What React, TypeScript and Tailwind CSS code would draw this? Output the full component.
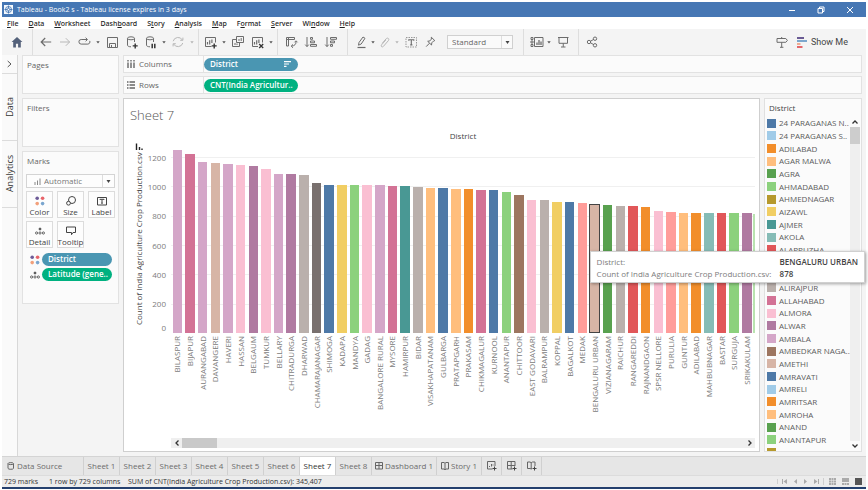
import type { ReactNode } from "react";

type Bar = { name: string; value: number; color: string };

const bars: Bar[] = [
  { name: "BILASPUR", value: 1245, color: "#d4a6c8" },
  { name: "BIJAPUR", value: 1220, color: "#d37295" },
  { name: "AURANGABAD", value: 1168, color: "#d4a6c8" },
  { name: "DAVANGERE", value: 1155, color: "#d7b5a6" },
  { name: "HAVERI", value: 1150, color: "#d4a6c8" },
  { name: "HASSAN", value: 1145, color: "#fabfd2" },
  { name: "BELGAUM", value: 1139, color: "#b07aa1" },
  { name: "TUMKUR", value: 1118, color: "#fabfd2" },
  { name: "BELLARY", value: 1084, color: "#d4a6c8" },
  { name: "CHITRADURGA", value: 1080, color: "#b07aa1" },
  { name: "DHARWAD", value: 1073, color: "#bab0ac" },
  { name: "CHAMARAJANAGAR", value: 1025, color: "#79706e" },
  { name: "SHIMOGA", value: 1011, color: "#4e79a7" },
  { name: "KADAPA", value: 1009, color: "#f1ce63" },
  { name: "MANDYA", value: 1009, color: "#8cd17d" },
  { name: "GADAG", value: 1005, color: "#fabfd2" },
  { name: "BANGALORE RURAL", value: 1005, color: "#d4a6c8" },
  { name: "MYSORE", value: 1004, color: "#d37295" },
  { name: "HAMIRPUR", value: 1004, color: "#499894" },
  { name: "BIDAR", value: 995, color: "#bab0ac" },
  { name: "VISAKHAPATANAM", value: 991, color: "#ffbe7d" },
  { name: "GULBARGA", value: 986, color: "#4e79a7" },
  { name: "PRATAPGARH", value: 982, color: "#ffbe7d" },
  { name: "PRAKASAM", value: 980, color: "#f28e2b" },
  { name: "CHIKMAGALUR", value: 975, color: "#d37295" },
  { name: "KURNOOL", value: 973, color: "#4e79a7" },
  { name: "ANANTAPUR", value: 961, color: "#8cd17d" },
  { name: "CHITTOOR", value: 943, color: "#9d7660" },
  { name: "EAST GODAVARI", value: 909, color: "#fabfd2" },
  { name: "BALRAMPUR", value: 909, color: "#bab0ac" },
  { name: "KOPPAL", value: 895, color: "#f1ce63" },
  { name: "BAGALKOT", value: 891, color: "#4e79a7" },
  { name: "MEDAK", value: 886, color: "#ff9d9a" },
  { name: "BENGALURU URBAN", value: 878, color: "#d7b5a6" },
  { name: "VIZIANAGARAM", value: 875, color: "#59a14f" },
  { name: "RAICHUR", value: 866, color: "#bab0ac" },
  { name: "RANGAREDDI", value: 866, color: "#e15759" },
  { name: "RAJNANDGAON", value: 859, color: "#f28e2b" },
  { name: "SPSR NELLORE", value: 834, color: "#fabfd2" },
  { name: "PURULIA", value: 827, color: "#ff9d9a" },
  { name: "GUNTUR", value: 820, color: "#ffbe7d" },
  { name: "ADILABAD", value: 820, color: "#f28e2b" },
  { name: "MAHBUBNAGAR", value: 818, color: "#86bcb6" },
  { name: "BASTAR", value: 818, color: "#e15759" },
  { name: "SURGUJA", value: 814, color: "#8cd17d" },
  { name: "SRIKAKULAM", value: 814, color: "#b07aa1" },
];

const AXIS_MAX = 1260;

const palette = [
  "#4e79a7", "#a0cbe8", "#f28e2b", "#ffbe7d", "#59a14f", "#8cd17d", "#b6992d",
  "#f1ce63", "#499894", "#86bcb6", "#e15759", "#ff9d9a", "#79706e", "#bab0ac",
  "#d37295", "#fabfd2", "#b07aa1", "#d4a6c8", "#9d7660", "#d7b5a6",
];

const legend = [
  "24 PARAGANAS N..", "24 PARAGANAS S..", "ADILABAD", "AGAR MALWA", "AGRA",
  "AHMADABAD", "AHMEDNAGAR", "AIZAWL", "AJMER", "AKOLA", "ALAPPUZHA", "ALIGARH",
  "ALIPURDUAR", "ALIRAJPUR", "ALLAHABAD", "ALMORA", "ALWAR", "AMBALA",
  "AMBEDKAR NAGA..", "AMETHI", "AMRAVATI", "AMRELI", "AMRITSAR", "AMROHA",
  "ANAND", "ANANTAPUR", "ANANTNAG",
];

const menus: [string, string, string][] = [
  ["", "F", "ile"], ["", "D", "ata"], ["", "W", "orksheet"], ["Dash", "b", "oard"],
  ["S", "t", "ory"], ["", "A", "nalysis"], ["", "M", "ap"], ["F", "o", "rmat"],
  ["", "S", "erver"], ["Wi", "n", "dow"], ["", "H", "elp"],
];

function Svg({ children, size = 16, className = "" }: { children: ReactNode; size?: number; className?: string }) {
  return (
    <svg
      width={size}
      height={size}
      viewBox={`0 0 ${size} ${size}`}
      fill="none"
      stroke="currentColor"
      strokeWidth="1"
      className={className}
      aria-hidden="true"
    >
      {children}
    </svg>
  );
}

function Tool({ label, dim, children }: { label: string; dim?: boolean; children: ReactNode }) {
  return (
    <button aria-label={label} className={dim ? "size-4 text-[#b8b8b8]" : "size-4 text-[#6c6c6c]"}>
      <Svg>{children}</Svg>
    </button>
  );
}

function Caret({ label, dim }: { label: string; dim?: boolean }) {
  return (
    <button aria-label={label} className={dim ? "flex w-[6px] justify-center text-[#b5b5b5]" : "flex w-[6px] justify-center text-[#555]"}>
      <svg width="4" height="3" viewBox="0 0 4 3" fill="currentColor" aria-hidden="true">
        <path d="M0.3 0.3h3.4L2 2.5z" />
      </svg>
    </button>
  );
}

function Sep() {
  return <div className="w-px self-stretch bg-[#dedede]" />;
}

const Plus = () => <path d="M12.2 9.4v5M9.7 11.9h5" stroke="#333" strokeWidth="1.4" />;

function Toolbar() {
  return (
    <div className="flex h-[26px] shrink-0 items-center bg-[#f4f4f4]">
      <div className="flex w-[30px] justify-center">
        <button aria-label="Start page" className="size-4 text-[#54617a]">
          <Svg><path d="M8 3 2.600 8h1.600v5.400h2.700v-3.600h2.200v3.600h2.700V8h1.600z" fill="currentColor" stroke="none" /></Svg>
        </button>
      </div>
      <Sep />
      <div className="flex items-center gap-[3px] pr-[3px] pl-[5px]">
        <Tool label="Undo"><path d="M13.2 8H3.2M7.2 4 3.2 8l4 4" strokeWidth="1.2" /></Tool>
        <Tool label="Redo" dim><path d="M3 8h9.6M8.8 4.2 12.6 8l-3.8 3.8" /></Tool>
        <Tool label="Replay"><path d="M11 5.500H5.200a2.300 2.300 0 0 0 0 4.600h6.600a2.200 2.200 0 0 0 1.900-3.200M9.600 3.700l1.900 1.800-1.900 1.800" /></Tool>
        <Caret label="Replay options" />
        <Tool label="Save"><path d="M3.500 3.500h10v10h-10zM5.500 13.500v-4h6v4M7.500 11v2.500" /></Tool>
        <Tool label="New data source">
          <path d="M4.500 4.500v6.800c0 .8 1.500 1.500 3.500 1.500M11.500 8V4.500" /><ellipse cx="8" cy="4.300" rx="3.500" ry="1.500" /><Plus />
        </Tool>
        <Tool label="Pause auto updates">
          <path d="M4.500 4.500v6.800c0 .8 1.500 1.500 3.500 1.500M11.500 8V4.500" /><ellipse cx="8" cy="4.300" rx="3.500" ry="1.500" />
          <path d="M10.200 9.800v4.500M12.800 9.800v4.500" stroke="#333" strokeWidth="1.500" />
        </Tool>
        <Caret label="Pause options" />
        <Tool label="Run update" dim><path d="M3.200 7.2A5 5 0 0 1 12.4 6M12.8 9A5 5 0 0 1 3.6 10M12.9 3.6v2.7h-2.7M3.1 12.4V9.7h2.7" /></Tool>
        <Caret label="Update options" dim />
      </div>
      <Sep />
      <div className="flex items-center gap-[3px] px-[3px]">
        <Tool label="New worksheet">
          <path d="M9.500 12.500h-6v-9h10v5" /><path d="M5.500 10.500V8M7.700 10.500V6.200M9.900 9V5.500" strokeWidth="1.200" /><Plus />
        </Tool>
        <Caret label="New worksheet options" />
        <Tool label="Duplicate">
          <path d="M6.500 2.500h7v6h-7zM9.500 8.500v2M6.500 5.500h-4v7h7v-4" /><path d="M9 7V5M11.200 7V4M5 11V9M7 11V9.500" />
        </Tool>
        <Tool label="Clear sheet">
          <path d="M9 12.500H3.500v-9h10v5" /><path d="M5.500 10.500V8M7.700 10.500V6.200M9.900 9V5.500" strokeWidth="1.200" />
          <path d="m10.200 10 4 4M14.200 10l-4 4" stroke="#333" strokeWidth="1.300" />
        </Tool>
        <Caret label="Clear options" />
      </div>
      <Sep />
      <div className="flex items-center gap-1 pr-2 pl-[5px]">
        <Tool label="Swap rows and columns">
          <path d="M3.500 3.500h2v2h-2zM5.500 3.500h6v2h-6zM3.500 5.500h2v6.500h-2z" /><path d="M13 7.500c.3 2.500-1.300 4.400-4.500 4.600M11.500 8.300 13 6.800l1.500 1.500M10 10.400 8.200 12.100l1.800 1.700" />
        </Tool>
        <Tool label="Sort ascending"><path d="M4 3v9.500M2.200 10.600 4 12.600l1.800-2M7.500 3.500h2v1.800h-2zM7.500 7h4v1.800h-4zM7.500 10.500h6v1.800h-6z" /></Tool>
        <Tool label="Sort descending"><path d="M4 3v9.500M2.200 10.600 4 12.600l1.800-2M7.500 3.500h6v1.800h-6zM7.500 7h4v1.800h-4zM7.500 10.500h2v1.800h-2z" /></Tool>
      </div>
      <Sep />
      <div className="flex items-center gap-[3px] pr-[10px] pl-[5px]">
        <div className="flex items-center gap-px">
          <Tool label="Highlight"><path d="M6 8.500 10 3l2 1.300-3.800 5.700-2.700 1.200z" /><path d="M4.500 13.500h8" strokeWidth="1.200" /></Tool>
          <Caret label="Highlight options" />
          <Tool label="Group" dim><path d="m5.200 8.800 4-4.600c1.500-1.500 3.500.2 2.200 1.900l-5 5.800c-1.300 1.300-3-.1-1.900-1.500l4.400-5" transform="translate(0 .5)" /></Tool>
          <Caret label="Group options" dim />
        </div>
        <Tool label="Show mark labels"><path d="M3 3.500h10.500v9.500H3z" strokeDasharray="1.500 1" stroke="#999" /><path d="M5.800 6.800V5.700h5v1.100M8.300 5.700v5.200M7.200 10.900h2.200" strokeWidth="1.100" /></Tool>
        <Tool label="Fix axes"><path d="m9.300 3.200 3.500 3.400-1.200.4-1.800 1.800-.3 2.200-3.800-3.700 2.200-.4 1.500-1.800zM7.500 9.200 4.200 12.600" /></Tool>
        <div className="relative ml-[6px] flex h-[14px] w-[66px] items-center border border-[#d0d0d0] bg-[#fafafa]">
          <select aria-label="Fit" className="h-full w-full appearance-none pl-1 text-[8px] leading-3 text-[#666]">
            <option>Standard</option>
          </select>
          <div className="pointer-events-none absolute inset-y-0 right-0 flex w-[11px] items-center justify-center border-l border-[#ddd] text-[#444]">
            <svg width="5" height="3" viewBox="0 0 5 3" fill="currentColor" aria-hidden="true"><path d="M0.500 0h4L2.500 3z" /></svg>
          </div>
        </div>
      </div>
      <Sep />
      <div className="flex items-center gap-px pr-[7px] pl-[5px]">
        <Tool label="Show or hide cards">
          <path d="M2 3.500h2v2H2zM2 7h2v2H2zM2 10.500h2v2H2zM5.500 3.500H14v9H5.500z" /><path d="M8 11V8.500M10 11V6M12 11V7.500" strokeWidth="1.300" />
        </Tool>
        <Caret label="Card options" />
        <div className="w-px" />
        <Tool label="Presentation mode"><path d="M3 3.500h10.500M4 3.500v5.800h8.500V3.500M8.250 9.300v3.600M6 13h4.500" /></Tool>
      </div>
      <Sep />
      <div className="flex items-center pl-[5px]">
        <Tool label="Share">
          <circle cx="5" cy="8" r="1.700" /><circle cx="11" cy="4.700" r="1.700" /><circle cx="11" cy="11.300" r="1.700" /><path d="m6.500 7.200 3-1.700M6.500 8.800l3 1.700" />
        </Tool>
      </div>
      <div className="ml-auto flex items-center gap-2 pr-[18px]">
        <Tool label="Guide"><path d="M4 4.500h8.800l1.600 1.900-1.600 1.900H4zM8.700 3v1.500M8.700 8.300v5M7 13.300h3.400" /></Tool>
        <button className="flex items-center gap-1 text-[9px] leading-3 text-[#444] [font-family:Roboto,sans-serif]">
          <svg width="10" height="11" viewBox="0 0 10 11" aria-hidden="true">
            <path d="M0 1h7" stroke="#5b4a8a" strokeWidth="1.800" /><path d="M0 4h10" stroke="#6f9fc9" strokeWidth="1.800" />
            <path d="M0 7h3.500" stroke="#f0a58a" strokeWidth="1.800" /><path d="M0 10h5.500" stroke="#e2575c" strokeWidth="1.800" />
          </svg>
          Show Me
        </button>
      </div>
    </div>
  );
}

function ColorDots() {
  return (
    <svg width="10" height="10" viewBox="0 0 10 10" className="shrink-0" aria-hidden="true">
      <circle cx="2.200" cy="2.200" r="1.800" fill="#6d5b97" /><circle cx="7.600" cy="2.200" r="1.800" fill="#e8646a" />
      <circle cx="2.200" cy="7.600" r="1.800" fill="#f2a07b" /><circle cx="7.600" cy="7.600" r="1.800" fill="#7aa6cf" />
    </svg>
  );
}

function DetailDots() {
  return (
    <svg width="10" height="10" viewBox="0 0 10 10" fill="none" stroke="#555" strokeWidth="0.900" className="shrink-0" aria-hidden="true">
      <circle cx="5" cy="3" r="1" fill="#444" /><circle cx="1.600" cy="7" r="1.100" /><circle cx="5" cy="7" r="1.100" /><circle cx="8.400" cy="7" r="1.100" />
    </svg>
  );
}

function MarkButton({ label, children }: { label: string; children: ReactNode }) {
  return (
    <button className="flex h-[27px] flex-col items-center justify-between border border-[#dcdcdc] bg-[#fdfdfd] pt-[3px] pb-px text-[8px] leading-[9px] text-[#444]">
      <span className="flex h-[11px] items-center">{children}</span>
      {label}
    </button>
  );
}

function Cards() {
  return (
    <aside className="flex w-[97px] shrink-0 flex-col gap-1 text-[8px] text-[#666]">
      <section className="h-[39px] border border-[#e2e2e2] bg-[#fbfbfb] px-1 pt-[4px]">
        <h2 className="leading-[10px]">Pages</h2>
      </section>
      <section className="h-[49px] border border-[#e2e2e2] bg-[#fbfbfb] px-1 pt-[4px]">
        <h2 className="leading-[10px]">Filters</h2>
      </section>
      <section className="h-[153px] border border-[#e2e2e2] bg-[#fbfbfb] px-[3px] pt-[4px]">
        <h2 className="pl-px leading-[10px]">Marks</h2>
        <div className="relative mt-[8px] flex h-[14px] items-center border border-[#d4d4d4] bg-[#fdfdfd]">
          <svg width="7" height="7" viewBox="0 0 7 7" stroke="#888" className="ml-[7px] shrink-0" aria-hidden="true">
            <path d="M1 7V4M3.500 7V2.500M6 7V0.500" strokeWidth="1" />
          </svg>
          <select aria-label="Mark type" className="h-full w-full appearance-none pl-[3px] text-[8px] leading-3 text-[#777]">
            <option>Automatic</option>
          </select>
          <div className="pointer-events-none absolute inset-y-0 right-0 flex w-[12px] items-center justify-center border-l border-[#ddd] text-[#444]">
            <svg width="5" height="3" viewBox="0 0 5 3" fill="currentColor" aria-hidden="true"><path d="M0.500 0h4L2.500 3z" /></svg>
          </div>
        </div>
        <div className="mt-[3px] grid grid-cols-3 gap-x-1 gap-y-[3px]">
          <MarkButton label="Color"><ColorDots /></MarkButton>
          <MarkButton label="Size">
            <Svg size={10}><circle cx="6" cy="4" r="3.500" /><circle cx="2.500" cy="7.200" r="1.900" fill="#fdfdfd" /></Svg>
          </MarkButton>
          <MarkButton label="Label">
            <Svg size={10}><path d="M.5 1.500h9v7.500h-9zM3 4V3.300h4V4M5 3.300v3.900M4.200 7.200h1.600" /></Svg>
          </MarkButton>
          <MarkButton label="Detail"><DetailDots /></MarkButton>
          <MarkButton label="Tooltip">
            <Svg size={10}><path d="M.5 1h9v5.500H7L5.500 8.700V6.500h-5z" /></Svg>
          </MarkButton>
        </div>
        <ul className="mt-[5px] flex flex-col gap-[2px] text-[8px] leading-[12px] font-semibold text-white">
          <li className="flex h-[13px] items-center gap-[2px] pl-1">
            <ColorDots />
            <span className="h-full w-[70px] rounded-full bg-[#4a96b2] pl-[6px]">District</span>
          </li>
          <li className="flex h-[13px] items-center gap-[2px] pl-1">
            <DetailDots />
            <span className="h-full w-[70px] rounded-full bg-[#00b180] pl-[6px] whitespace-nowrap">Latitude (gene..</span>
          </li>
        </ul>
      </section>
    </aside>
  );
}

function Shelf({ label, icon, children }: { label: string; icon: ReactNode; children: ReactNode }) {
  return (
    <div className="flex h-[18px] shrink-0 items-center border border-[#e2e2e2] bg-[#fbfbfb]">
      <div className="flex h-full w-[80px] items-center gap-1 border-r border-[#e2e2e2] pl-[3px] text-[8px] text-[#666]">
        {icon}
        {label}
      </div>
      {children}
    </div>
  );
}

function Chart() {
  return (
    <section className="flex min-w-0 flex-1 flex-col border border-[#cfcfcf] bg-white">
      <h1 className="pt-2 pl-[6px] text-[13px] leading-4 font-light text-[#555]">Sheet 7</h1>
      <div className="flex min-h-0 flex-1">
        <div className="flex w-[47px] shrink-0 pt-5 pl-[9px]">
          <div className="flex w-[12px] flex-col items-center">
            <svg width="8" height="8" viewBox="0 0 8 8" stroke="#222" className="shrink-0" aria-hidden="true">
              <path d="M1.500 0.500v6.500M4.500 4v3M7 5.500v1.500" strokeWidth="1.400" />
            </svg>
            <div className="h-[176px] rotate-180 text-center text-[8px] leading-[12px] whitespace-nowrap text-[#444] [writing-mode:vertical-rl]">
              Count of India Agriculture Crop Production.csv
            </div>
          </div>
          <ol className="flex h-[194px] flex-1 flex-col pr-[5px] text-right text-[8px] leading-none text-[#7c7c7c]">
            {[1200, 1000, 800, 600, 400, 200].map((tick) => (
              <li key={tick} className="flex flex-1 items-center justify-end">{tick}</li>
            ))}
            <li className="flex h-[18px] items-center justify-end">0</li>
          </ol>
        </div>
        <div className="flex min-w-0 flex-1 flex-col pr-1">
          <h2 className="flex h-[25px] items-center justify-center text-[8px] font-medium text-[#444]">District</h2>
          <div className="relative flex h-[185px] shrink-0">
            <div className="absolute inset-x-0 bottom-0 flex h-[176px] flex-col">
              {[1200, 1000, 800, 600, 400, 200].map((tick) => (
                <div key={tick} className="flex-1 border-t border-[#f0f0f0]" />
              ))}
            </div>
            <div className="relative flex min-w-0 flex-1 items-end">
              {bars.map((bar) => (
                <div
                  key={bar.name}
                  className="flex flex-1 justify-center"
                  style={{ height: `${(bar.value / AXIS_MAX) * 100}%` }}
                >
                  <div
                    className={bar.value === 878 ? "w-[11px] border border-[#444]" : "w-3/4"}
                    style={{ backgroundColor: bar.color }}
                  />
                </div>
              ))}
            </div>
            <div className="relative h-[119px] w-[2px] self-end bg-[#b9e3b0]" />
          </div>
          <ul className="flex pt-[3px] pr-[2px] text-[8px] leading-[12px] whitespace-nowrap text-[#7c7c7c]">
            {bars.map((bar) => (
              <li key={bar.name} className="flex min-w-0 flex-1 justify-center">
                <span className="rotate-180 self-start [writing-mode:vertical-rl]">{bar.name}</span>
              </li>
            ))}
          </ul>
          <div className="mt-auto mb-[3px] flex h-[10px] shrink-0 items-stretch bg-[#efefef] text-[#333]">
            <button aria-label="Scroll left" className="flex w-[11px] items-center justify-center">
              <svg width="4" height="6" viewBox="0 0 4 6" fill="none" stroke="currentColor" strokeWidth="1.300" aria-hidden="true"><path d="M3.500.5 1 3l2.500 2.500" /></svg>
            </button>
            <div className="w-[35px] bg-[#c9c9c9]" />
            <button aria-label="Scroll right" className="ml-auto flex w-[11px] items-center justify-center">
              <svg width="4" height="6" viewBox="0 0 4 6" fill="none" stroke="currentColor" strokeWidth="1.300" aria-hidden="true"><path d="M.5.5 3 3 .5 5.500" /></svg>
            </button>
          </div>
        </div>
      </div>
    </section>
  );
}

function Legend() {
  return (
    <aside className="flex w-[98px] shrink-0 flex-col border border-[#e0e0e0] bg-[#fbfbfb] text-[8px] text-[#5c5c5c]">
      <h2 className="pt-1 pl-[4px] leading-[10px] text-[#444]">District</h2>
      <div className="mt-1 flex min-h-0 flex-1">
        <div className="min-w-0 flex-1 overflow-hidden">
          <ul className="grid h-[342px] auto-rows-fr pl-[2px]">
            {legend.map((name, i) => (
              <li key={name} className="flex min-h-0 items-center gap-[3px] leading-[12px] whitespace-nowrap">
                <span className="size-[9px] shrink-0" style={{ backgroundColor: palette[i % palette.length] }} />
                {name}
              </li>
            ))}
          </ul>
        </div>
        <div className="mr-px flex w-[10px] shrink-0 flex-col bg-[#efefef] text-[#333]">
          <button aria-label="Scroll up" className="flex h-[10px] items-center justify-center bg-[#fbfbfb]">
            <svg width="6" height="4" viewBox="0 0 6 4" fill="none" stroke="currentColor" strokeWidth="1.300" aria-hidden="true"><path d="M.5 3.500 3 1l2.500 2.500" /></svg>
          </button>
          <div className="h-[17px] bg-[#cdcdcd]" />
          <button aria-label="Scroll down" className="mt-auto flex h-[10px] items-center justify-center bg-[#fbfbfb]">
            <svg width="6" height="4" viewBox="0 0 6 4" fill="none" stroke="currentColor" strokeWidth="1.300" aria-hidden="true"><path d="M.5.5 3 3 5.500.5" /></svg>
          </button>
        </div>
      </div>
    </aside>
  );
}

function SheetTabs() {
  const icon = "shrink-0 text-[#666]";
  return (
    <nav className="flex h-[19px] shrink-0 items-stretch border-t border-[#d4d4d4] bg-[#e6e6e6] text-[8px] text-[#6c6c6c]">
      <button className="flex w-[82px] items-center gap-[2px] border-r border-[#d0d0d0] pl-[5px]">
        <Svg size={8} className={icon}><path d="M1 1.800v4.600c0 1.200 5.500 1.200 5.500 0V1.800" /><ellipse cx="3.750" cy="1.600" rx="2.750" ry="1" /></Svg>
        Data Source
      </button>
      {[1, 2, 3, 4, 5, 6, 7, 8].map((n) => (
        <button
          key={n}
          className={
            n === 7
              ? "w-[36px] border-r border-[#d0d0d0] bg-white font-medium whitespace-nowrap text-[#333]"
              : "w-[36px] border-r border-[#d0d0d0] whitespace-nowrap"
          }
        >
          Sheet {n}
        </button>
      ))}
      <button className="flex w-[65px] items-center justify-center gap-[2px] border-r border-[#d0d0d0] whitespace-nowrap">
        <Svg size={8} className={icon}><path d="M.5.5h7v6.500h-7zM4 .5V7M.5 3.500h7" /></Svg>
        Dashboard 1
      </button>
      <button className="flex w-[45px] items-center justify-center gap-[2px] border-r border-[#d0d0d0] whitespace-nowrap">
        <Svg size={8} className={icon}><path d="M.5.5H3l1 .8 1-.8h2.500V7H5l-1 .8L3 7H.5zM4 1.300v6.500" /></Svg>
        Story 1
      </button>
      <button aria-label="New worksheet" className="flex w-[20px] items-center justify-center border-r border-[#d0d0d0]">
        <Svg size={10} className={icon}><path d="M5.500 8H.5V.5H8v4.500M2.500 6V5M4.500 5.500V3M6 4.500V3.500" /><path d="M7.500 5.500v4M5.500 7.500h4" stroke="#444" /></Svg>
      </button>
      <button aria-label="New dashboard" className="flex w-[20px] items-center justify-center border-r border-[#d0d0d0]">
        <Svg size={10} className={icon}><path d="M5.500 8H.5V.5H8v4.500M4.200.5v7.500M.5 4.500H8" /><path d="M7.500 5.500v4M5.500 7.500h4" stroke="#444" /></Svg>
      </button>
      <button aria-label="New story" className="flex w-[20px] items-center justify-center border-r border-[#d0d0d0]">
        <Svg size={10} className={icon}><path d="M5 7.500 4.200 8 3 7.500H.5V1H3l1.200.7L5.500 1H8v4M4.200 1.700V8" /><path d="M7.500 5.500v4M5.500 7.500h4" stroke="#444" /></Svg>
      </button>
    </nav>
  );
}

function StatusBar() {
  return (
    <footer className="flex h-[12px] shrink-0 items-center border-t border-[#dcdcdc] bg-[#ececec] pl-[2px] text-[7px] leading-none text-[#333]">
      <span className="w-[45px]">729 marks</span>
      <span className="w-[79px]">1 row by 729 columns</span>
      <span>SUM of CNT(India Agriculture Crop Production.csv): 345,407</span>
      <div className="ml-auto flex items-center gap-[7px] border-l border-[#cfcfcf] px-1 text-[#aaa]">
        <button aria-label="First"><svg width="5" height="5" viewBox="0 0 5 5" fill="currentColor" aria-hidden="true"><path d="M0 0h1v5H0zM5 0v5L1.500 2.500z" /></svg></button>
        <button aria-label="Previous"><svg width="3" height="5" viewBox="0 0 3 5" fill="currentColor" aria-hidden="true"><path d="M3 0v5L0 2.500z" /></svg></button>
        <button aria-label="Next"><svg width="3" height="5" viewBox="0 0 3 5" fill="currentColor" aria-hidden="true"><path d="M0 0v5l3-2.500z" /></svg></button>
        <button aria-label="Last"><svg width="5" height="5" viewBox="0 0 5 5" fill="currentColor" aria-hidden="true"><path d="M4 0h1v5H4zM0 0v5l3.500-2.500z" /></svg></button>
      </div>
      <div className="flex items-center gap-[6px] border-l border-[#cfcfcf] pr-[4px] pl-[5px]">
        <button aria-label="Grid view"><svg width="7" height="7" viewBox="0 0 7 7" fill="#aaa" aria-hidden="true"><path d="M0 0h2v2H0zM2.500 0h2v2h-2zM5 0h2v2H5zM0 2.500h2v2H0zM2.500 2.500h2v2h-2zM5 2.500h2v2H5zM0 5h2v2H0zM2.500 5h2v2h-2zM5 5h2v2H5z" /></svg></button>
        <button aria-label="Filmstrip view"><svg width="7" height="7" viewBox="0 0 7 7" fill="#aaa" aria-hidden="true"><path d="M0 0h7v4H0zM0 5h2v2H0zM2.500 5h2v2h-2zM5 5h2v2H5z" /></svg></button>
        <button aria-label="Sheet view"><svg width="7" height="7" viewBox="0 0 7 7" fill="#555" aria-hidden="true"><path d="M0 0h7v7H0z" /></svg></button>
      </div>
    </footer>
  );
}

export default function App() {
  return (
    <div className="flex h-screen min-h-[480px] flex-col bg-white px-[2px] pt-[2px] pb-px [font-family:'Open_Sans','Noto_Sans',sans-serif]">
      <header className="flex h-[15px] shrink-0 items-center bg-[#4677b4] pl-[2px] text-white">
        <svg width="9" height="9" viewBox="0 0 9 9" fill="none" stroke="#fff" strokeWidth="0.900" aria-hidden="true">
          <path d="M0 0h9v9H0z" fill="#f4f8fc" stroke="none" />
          <circle cx="4.500" cy="4.500" r="3" stroke="#4677b4" /><path d="M4.500.5v8M.5 4.500h8" stroke="#4677b4" /><circle cx="4.500" cy="4.500" r="1.200" fill="#fff" stroke="#4677b4" />
        </svg>
        <span className="pl-1 text-[7px] leading-none">Tableau - Book2 s - Tableau license expires in 3 days</span>
        <div className="ml-auto flex items-center gap-[21px] pr-[12px]">
          <button aria-label="Minimize"><Svg size={8}><path d="M1 4.500h6" /></Svg></button>
          <button aria-label="Restore"><Svg size={8}><path d="M1 2.500h4.500V7H1zM2.500 2.500v-1.500H7v4.500H5.500" /></Svg></button>
          <button aria-label="Close"><Svg size={8}><path d="m1 1 6 6M7 1 1 7" /></Svg></button>
        </div>
      </header>
      <nav className="flex h-[12px] shrink-0 items-center gap-[10px] bg-white pl-[5px] text-[7px] leading-none font-medium text-[#222] [font-family:'Noto_Sans','Open_Sans',sans-serif]">
        {menus.map(([before, key, after]) => (
          <button key={before + key + after}>
            {before}<span className="underline">{key}</span>{after}
          </button>
        ))}
      </nav>
      <Toolbar />
      <div className="flex min-h-0 flex-1 bg-[#f4f4f4]">
        <div className="flex w-[16px] shrink-0 flex-col border-r border-[#d8d8d8] bg-[#fafafa] text-[9px] text-[#333]">
          <button aria-label="Expand data pane" className="flex h-[19px] items-center justify-center border-b border-[#dcdcdc]">
            <svg width="5" height="8" viewBox="0 0 5 8" fill="none" stroke="#555" aria-hidden="true"><path d="M.7 1 4 4 .7 7" /></svg>
          </button>
          <button className="flex h-[67px] items-center justify-center border-b border-[#dcdcdc]">
            <span className="rotate-180 leading-[14px] [writing-mode:vertical-rl]">Data</span>
          </button>
          <button className="flex h-[67px] items-center justify-center border-b border-[#dcdcdc]">
            <span className="rotate-180 leading-[14px] [writing-mode:vertical-rl]">Analytics</span>
          </button>
        </div>
        <div className="flex min-w-0 flex-1 gap-1 pr-1 pb-1 pl-1">
          <Cards />
          <main className="flex min-w-0 flex-1 flex-col">
            <div className="flex flex-col gap-[3px] pb-1">
              <Shelf
                label="Columns"
                icon={<svg width="8" height="8" viewBox="0 0 8 8" stroke="#666" aria-hidden="true"><path d="M1 0v1.500M4 0v1.500M7 0v1.500M1 2.500V8M4 2.500V8M7 2.500V8" strokeWidth="1.400" /></svg>}
              >
                <span className="flex h-[13px] w-[94px] items-center justify-between rounded-full bg-[#4a96b2] pr-[7px] pl-[6px] text-[8px] font-semibold text-white">
                  District
                  <svg width="7" height="6" viewBox="0 0 7 6" stroke="#fff" aria-hidden="true"><path d="M0 .7h7M0 3h5M0 5.300h2.500" strokeWidth="1.200" /></svg>
                </span>
              </Shelf>
              <Shelf
                label="Rows"
                icon={<svg width="8" height="8" viewBox="0 0 8 8" stroke="#666" aria-hidden="true"><path d="M0 1h1.500M0 4h1.500M0 7h1.500M2.500 1H8M2.500 4H8M2.500 7H8" strokeWidth="1.400" /></svg>}
              >
                <span className="flex h-[13px] w-[94px] items-center rounded-full bg-[#00b180] pl-[6px] text-[8px] font-semibold whitespace-nowrap text-white">
                  CNT(India Agricultur..
                </span>
              </Shelf>
            </div>
            <div className="relative flex min-h-0 flex-1 gap-1">
              <Chart />
              <Legend />
              <dl
                role="tooltip"
                className="absolute top-[153px] -right-[3px] grid grid-cols-[180px_auto] gap-x-[3px] border border-[#d0d0d0] bg-white px-[6px] pt-1 pb-[2px] text-[8px] leading-3 whitespace-nowrap text-[#7c7c7c] shadow-[1px_1px_3px_rgba(0,0,0,0.35)]"
              >
                <dt>District:</dt>
                <dd className="font-semibold text-[#444]">BENGALURU URBAN</dd>
                <dt>Count of India Agriculture Crop Production.csv:</dt>
                <dd className="font-semibold text-[#444]">878</dd>
              </dl>
            </div>
          </main>
        </div>
      </div>
      <SheetTabs />
      <StatusBar />
      <div className="h-[2px] shrink-0 bg-[#24406e]" />
    </div>
  );
}
